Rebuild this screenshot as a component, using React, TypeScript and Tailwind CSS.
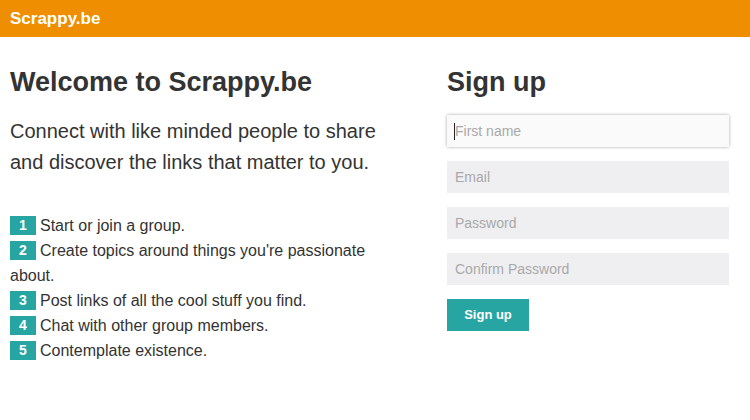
const STEPS = [
  "Start or join a group.",
  "Create topics around things you're passionate about.",
  "Post links of all the cool stuff you find.",
  "Chat with other group members.",
  "Contemplate existence.",
];

const FIELDS = ["Email", "Password", "Confirm Password"];

export default function App() {
  return (
    <div className="min-h-[420px] w-[750px] bg-white font-['Liberation_Sans',Arial,sans-serif] text-[#333]">
      {/* Top bar */}
      <header className="flex h-[37px] items-center bg-[#ee8e00] px-[10px]">
        <span className="text-[17px] font-bold text-white">Scrappy.be</span>
      </header>

      <main className="flex pt-[27px]">
        {/* Intro */}
        <section className="ml-[10px] w-[390px]">
          <h1 className="text-[27px] font-bold leading-[36px]">Welcome to Scrappy.be</h1>
          <p className="mt-[16px] text-[20px] leading-[31px]">
            Connect with like minded people to share and discover the links that matter to you.
          </p>
          <ol className="mt-[35px] text-[16px] leading-[25px]">
            {STEPS.map((step, i) => (
              <li key={i}>
                <span className="mr-[4px] inline-block h-[19px] w-[26px] bg-[#27a5a2] text-center align-[1px] text-[14px] font-bold leading-[19px] text-white">
                  {i + 1}
                </span>
                {step}
              </li>
            ))}
          </ol>
        </section>

        {/* Sign up form */}
        <section className="ml-[47px] w-[282px]">
          <h2 className="text-[27px] font-bold leading-[36px]">Sign up</h2>
          <div className="relative mt-[15px]">
            <input
              placeholder="First name"
              className="block h-[32px] w-full bg-[#fafafa] pl-[8px] text-[14px] text-[#333] shadow-[0_0_3px_rgba(0,0,0,0.35)] outline-none placeholder:text-[#a9a9a9]"
            />
            <span className="absolute left-[7px] top-[8px] h-[17px] w-px bg-[#222]" />
          </div>
          {FIELDS.map((f) => (
            <input
              key={f}
              placeholder={f}
              type={f === "Email" ? "email" : f.includes("Password") ? "password" : "text"}
              className="mt-[14px] block h-[32px] w-full bg-[#efeff1] pl-[8px] text-[14px] text-[#333] outline-none placeholder:text-[#a9a9a9]"
            />
          ))}
          <button className="mt-[14px] h-[32px] w-[82px] bg-[#27a5a2] text-[13px] font-bold text-white">
            Sign up
          </button>
        </section>
      </main>
    </div>
  );
}
